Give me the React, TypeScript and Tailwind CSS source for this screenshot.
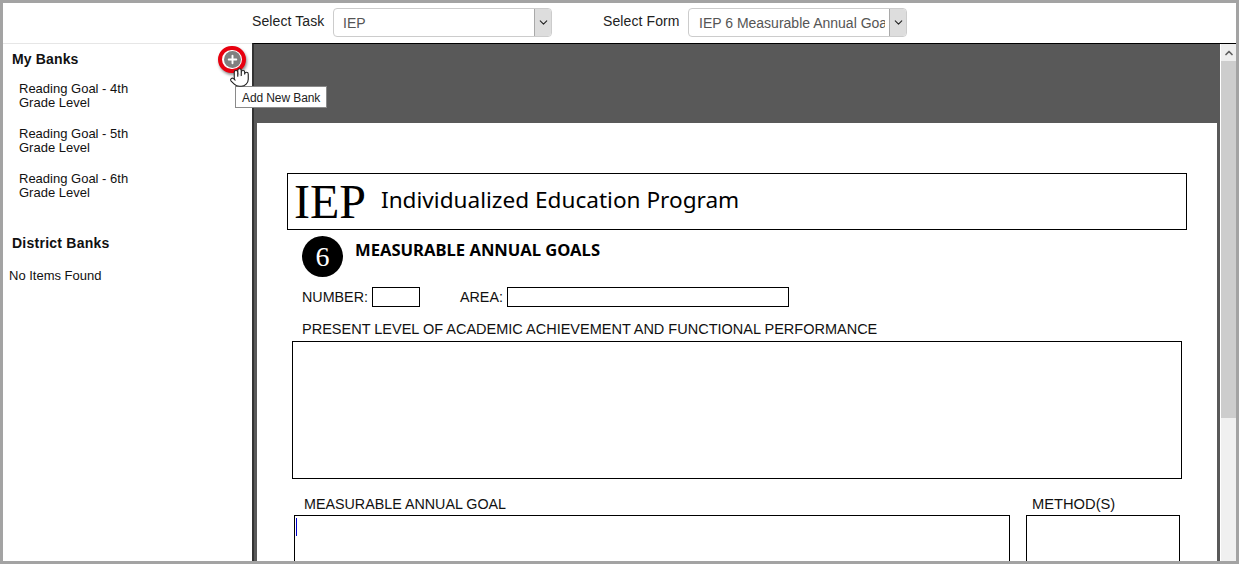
import { ChevronDown, ChevronUp, Hand, Plus } from "lucide-react";

function FakeSelect({ value, width, pad }: { value: string; width: string; pad: string }) {
  return (
    <div className={`-mt-[2px] flex h-[29px] items-stretch overflow-hidden rounded-[4px] border border-[#cccccc] bg-white ${width}`}>
      <div className={`mr-[4px] flex-1 overflow-hidden whitespace-nowrap text-[14px] leading-[28px] text-[#555555] ${pad}`}>{value}</div>
      <div className="flex w-[17px] items-center justify-center border-l border-[#a9a9a9] bg-[#dddddd]">
        <ChevronDown size={13} strokeWidth={2} className="text-[#222222]" />
      </div>
    </div>
  );
}

const myBanks = ["4th", "5th", "6th"];

export default function App() {
  return (
    <div className="relative flex h-[564px] w-[1239px] flex-col overflow-hidden border-[3px] border-[#a3a3a3] bg-white font-['Liberation_Sans',sans-serif] text-black">
      {/* Top selectors */}
      <div className="flex h-[40px] items-center pl-[249px] text-[14px] text-[#222222]">
        <span className="w-[81px] -translate-y-[2px] tracking-[0.1px]">Select Task</span>
        <FakeSelect value="IEP" width="w-[219px]" pad="pl-[9px]" />
        <span className="ml-[51px] w-[85px] -translate-y-[2px] tracking-[0.1px]">Select Form</span>
        <FakeSelect value="IEP 6 Measurable Annual Goals" width="w-[219px]" pad="pl-[10px]" />
      </div>

      <div className="flex min-h-0 flex-1">
        {/* Sidebar */}
        <div className="w-[249px] shrink-0 border-t border-[#e6e6e6] text-[13px] leading-[14px]">
          <div className="flex h-[30px] items-center justify-between pl-[9px] pr-[6px]">
            <span className="text-[14px] font-bold tracking-[0.15px] text-[#111111]">My Banks</span>
            <div className="flex h-[27px] w-[28px] items-center justify-center rounded-full border-[4px] border-[#e8000f] bg-white shadow-[1px_2px_3px_rgba(0,0,0,0.45)]">
              <div className="flex h-[17px] w-[17px] items-center justify-center rounded-full bg-[#808080]">
                <Plus size={13} strokeWidth={3.5} className="text-white" />
              </div>
            </div>
          </div>
          <div className="mt-[8px] flex flex-col gap-[17px] pl-[16px]">
            {myBanks.map((g) => (
              <div key={g} className="text-[#111111]">
                Reading Goal - {g}
                <br />
                Grade Level
              </div>
            ))}
          </div>
          <div className="mt-[36px] pl-[9px] text-[14px] font-bold tracking-[0.25px] text-[#111111]">District Banks</div>
          <div className="mt-[19px] pl-[6px] text-[#111111]">No Items Found</div>
        </div>

        {/* Document viewer */}
        <div className="flex min-w-0 flex-1 border-l-2 border-t border-l-[#333333] border-t-black bg-[#595959]">
          <div className="min-w-0 flex-1 pl-[3px] pr-[3px] pt-[79px]">
            <div className="h-[500px] bg-white pl-[30px] pr-[30px] pt-[50px]">
              <div className="flex h-[57px] items-center border border-black">
                <span className="ml-[6px] font-['Liberation_Serif',serif] text-[48px] leading-none">IEP</span>
                <span className="ml-[15px] -translate-y-[1px] font-['Noto_Sans',sans-serif] text-[22.6px] leading-none">Individualized Education Program</span>
              </div>
              <div className="mt-[6px] flex pl-[15px]">
                <div className="flex h-[41px] w-[41px] items-center justify-center rounded-full bg-black font-['Liberation_Serif',serif] text-[28px] text-white">6</div>
                <div className="ml-[12px] mt-[2px] font-['Noto_Sans',sans-serif] text-[16.6px] font-bold">MEASURABLE ANNUAL GOALS</div>
              </div>
              <div className="mt-[10px] flex h-[20px] items-center pl-[15px] text-[14.3px] text-[#111111]">
                <span className="w-[70px] translate-y-[1px]">NUMBER:</span>
                <div className="h-[20px] w-[48px] border border-black" />
                <span className="ml-[40px] w-[47px] translate-y-[1px]">AREA:</span>
                <div className="h-[20px] w-[282px] border border-black" />
              </div>
              <div className="mt-[14px] pl-[15px] text-[14.5px] leading-[16px] text-[#111111]">PRESENT LEVEL OF ACADEMIC ACHIEVEMENT AND FUNCTIONAL PERFORMANCE</div>
              <div className="ml-[5px] mt-[4px] h-[138px] w-[890px] border border-black" />
              <div className="mt-[17px] flex text-[14.3px] leading-[16px] text-[#111111]">
                <div className="ml-[7px] w-[738px] pl-[10px]">MEASURABLE ANNUAL GOAL</div>
                <div className="text-[14.7px]">METHOD(S)</div>
              </div>
              <div className="mt-[3px] flex">
                <div className="relative ml-[7px] h-[60px] w-[716px] border border-black">
                  <div className="ml-[1px] mt-[2px] h-[18px] w-[1px] bg-[#0000c8]" />
                </div>
                <div className="ml-[16px] h-[60px] w-[154px] border border-black" />
              </div>
            </div>
          </div>

          {/* Scrollbar */}
          <div className="flex w-[16px] shrink-0 flex-col border-l border-white bg-[#f0f0f0]">
            <div className="flex h-[17px] items-center justify-center bg-[#eeeeee]">
              <ChevronUp size={12} strokeWidth={3.5} className="text-[#606060]" />
            </div>
            <div className="h-[357px] bg-[#cdcdcd]" />
          </div>
        </div>
      </div>

      {/* Tooltip and cursor over the add button */}
      <div className="absolute left-[232px] top-[83px] border border-[#8a8a8a] bg-white px-[6px] pb-[2px] pt-[4px] text-[12px] leading-[14px] tracking-[-0.1px] text-[#222222]">Add New Bank</div>
      <Hand size={21} strokeWidth={1.3} className="absolute left-[226px] top-[64px] fill-white text-[#222222]" />
    </div>
  );
}
